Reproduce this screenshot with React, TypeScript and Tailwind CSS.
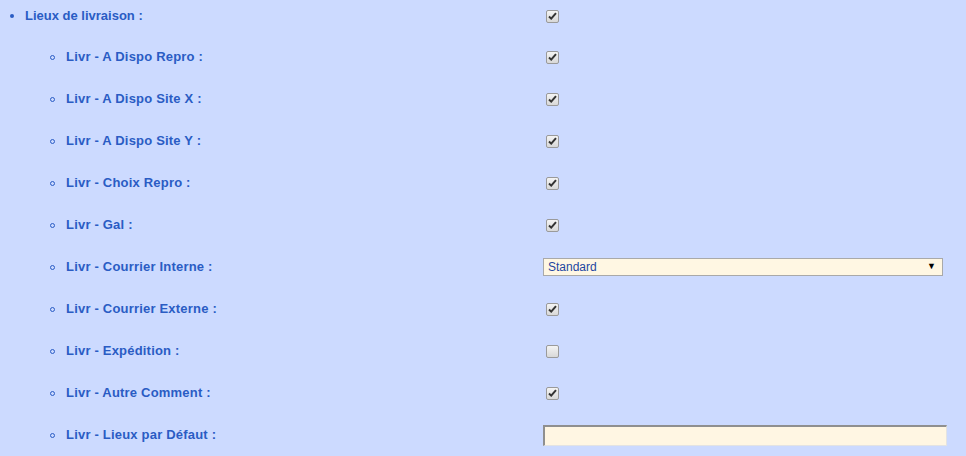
import React from "react";

type Item = { label: string; kind: "check" | "empty" | "select" | "text" };

const items: Item[] = [
  { label: "Livr - A Dispo Repro :", kind: "check" },
  { label: "Livr - A Dispo Site X :", kind: "check" },
  { label: "Livr - A Dispo Site Y :", kind: "check" },
  { label: "Livr - Choix Repro :", kind: "check" },
  { label: "Livr - Gal :", kind: "check" },
  { label: "Livr - Courrier Interne :", kind: "select" },
  { label: "Livr - Courrier Externe :", kind: "check" },
  { label: "Livr - Expédition :", kind: "empty" },
  { label: "Livr - Autre Comment :", kind: "check" },
  { label: "Livr - Lieux par Défaut :", kind: "text" },
];

function Box({ checked }: { checked: boolean }) {
  return (
    <span className="ml-[3px] flex h-[13px] w-[13px] items-center justify-center rounded-[2px] border border-[#9a9a9a] bg-gradient-to-b from-[#f4f4f4] to-[#d8d8d8]">
      {checked && (
        <svg width="9" height="8" viewBox="0 0 9 8">
          <path d="M1 4.5 L3.2 6.6 L8 1.2" fill="none" stroke="#333" strokeWidth="2" />
        </svg>
      )}
    </span>
  );
}

function Control({ kind }: { kind: Item["kind"] }) {
  if (kind === "select")
    return (
      <div className="flex h-[18px] w-[400px] items-center justify-between border border-[#a9a9a9] bg-[#fff7e3] pl-1 pr-[6px] text-[12px] font-normal text-[#2446a0]">
        <span>Standard</span>
        <span className="text-[9px] text-black">▼</span>
      </div>
    );
  if (kind === "text")
    return (
      <div className="h-[21px] w-[404px] border-t-2 border-l-2 border-b border-r border-t-[#8f8f8f] border-l-[#8f8f8f] border-b-[#e3e3e3] border-r-[#e3e3e3] bg-[#fff6e3]" />
    );
  return <Box checked={kind === "check"} />;
}

export default function App() {
  return (
    <div className="min-h-screen bg-[#ccdaff] pt-[5px] font-['Liberation_Sans',Arial,sans-serif] text-[13px] font-bold text-[#2a5cc4]">
      <ul>
        <li>
          <div className="flex h-[22px] items-center">
            <span className="ml-[10px] mr-[11px] h-[4px] w-[4px] rounded-full bg-[#2a5cc4]" />
            <span className="w-[518px]">Lieux de livraison :</span>
            <Control kind="check" />
          </div>
          <ul className="mt-[19px] flex flex-col gap-[20px]">
            {items.map((it) => (
              <li key={it.label} className="flex h-[22px] items-center">
                <span className="ml-[50px] mr-[11px] h-[5px] w-[5px] rounded-full border border-[#2a5cc4]" />
                <span className="w-[477px] tracking-[0.2px]">{it.label}</span>
                <Control kind={it.kind} />
              </li>
            ))}
          </ul>
        </li>
      </ul>
    </div>
  );
}
